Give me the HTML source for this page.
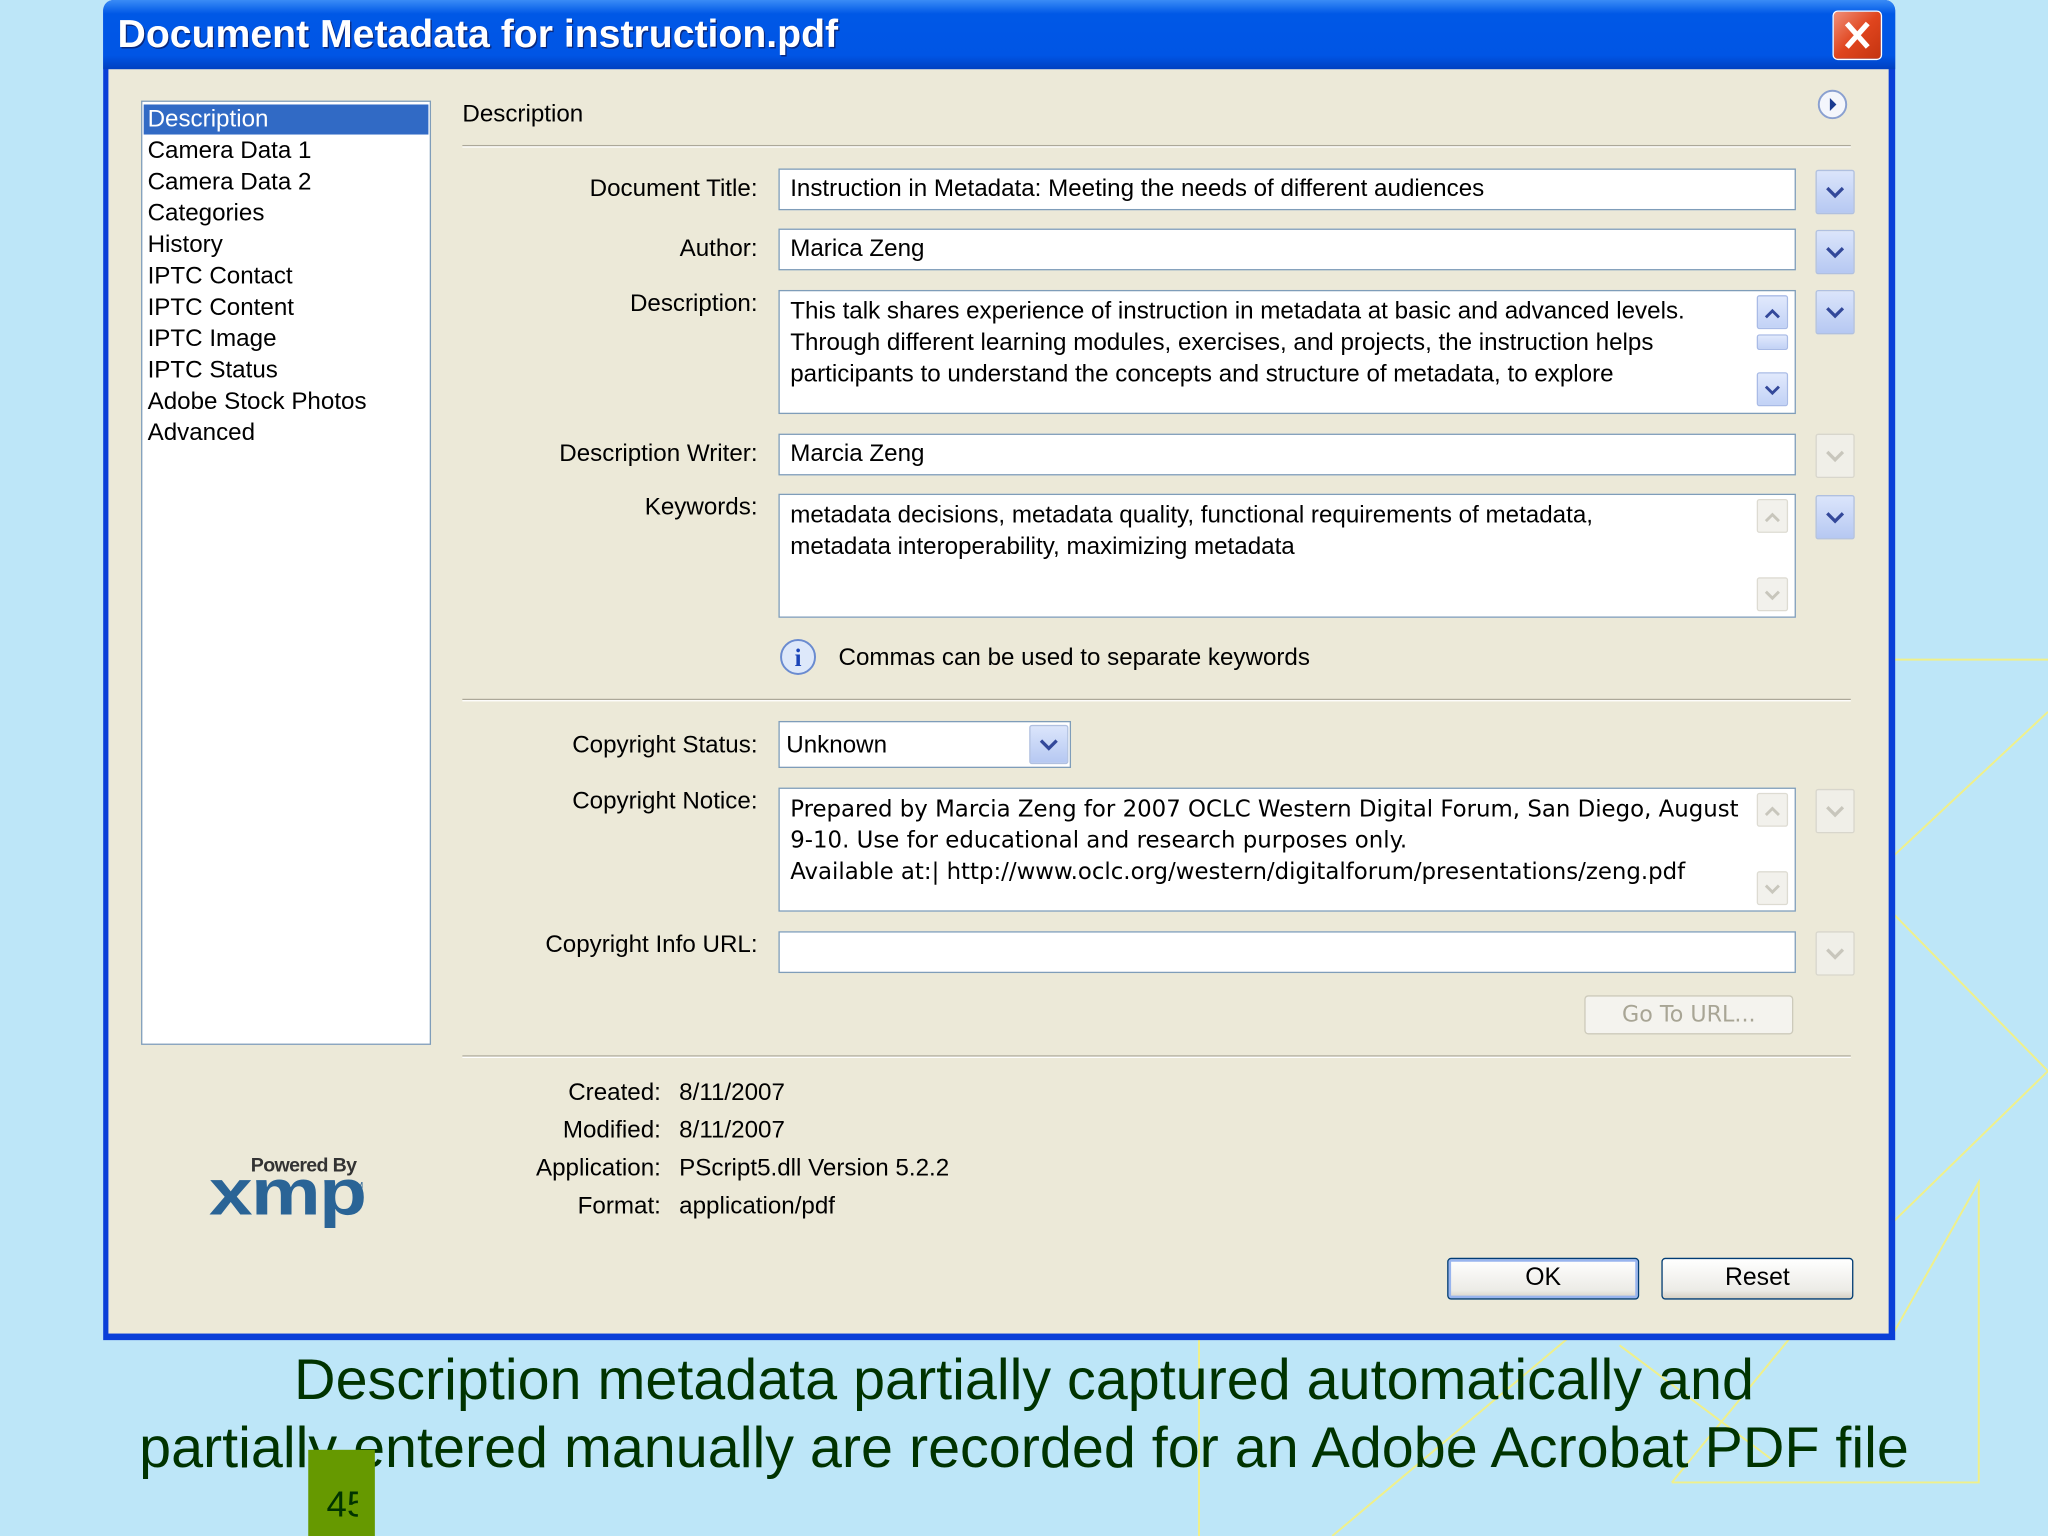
<!DOCTYPE html>
<html><head><meta charset="utf-8"><style>
*{margin:0;padding:0;box-sizing:border-box}
html,body{width:2048px;height:1536px;overflow:hidden;background:#bde6f8}
#s{position:absolute;left:0;top:0;width:1568px;height:1176px;transform:scale(1.30612);transform-origin:0 0;font-family:"Liberation Sans",sans-serif;}
.a{position:absolute}
.t{position:absolute;font-size:18.5px;color:#000;white-space:nowrap;line-height:24px}
.r{text-align:right;width:300px}
.f{position:absolute;background:#fff;border:1px solid #7f9db9}
.dd{position:absolute;width:30px;height:34px;background:linear-gradient(#dbe5fb,#b6c8f2);border:1px solid #b0c0e0;border-radius:2px}
.dd.dis{background:#f0efe8;border-color:#d8d6cc}
.sb{position:absolute;width:24px;height:26px;border:1px solid #a9bbe6;background:linear-gradient(#e1e9fc,#c2d2f6);border-radius:2px}
.sb.dis{background:#f2f1ec;border-color:#dddbd2}
.sep{position:absolute;left:354px;width:1063px;height:2px;border-top:1px solid #aca899;border-bottom:1px solid #fff}
.btn{position:absolute;height:32px;border:1px solid #003c74;border-radius:3px;background:linear-gradient(#fff,#ecebe6 80%,#d6d0c5);font-size:19px;text-align:center;line-height:30px}
</style></head><body><div id="s">
<svg class="a" style="left:0;top:0" width="1568" height="1176">
<g stroke="#f0f08a" stroke-width="1.5" fill="none">
<line x1="1450" y1="505" x2="1568" y2="505"/>
<line x1="1568" y1="545" x2="1450" y2="655"/>
<line x1="1450" y1="700" x2="1568" y2="820"/>
<line x1="1568" y1="820" x2="1450" y2="935"/>
<polyline points="1450,1020 1515,905 1515,1135 1280,1135"/>
<line x1="918" y1="1025" x2="918" y2="1176"/>
<line x1="1020" y1="1176" x2="1200" y2="1025"/>
<line x1="1280" y1="1135" x2="1370" y2="1025"/>
<line x1="1240" y1="1030" x2="1360" y2="1120"/>
</g></svg>
<div class="a" style="left:79px;top:0;width:1372px;height:1026px;background:#0a3fd8;border-radius:8px 8px 0 0"></div>
<div class="a" style="left:79px;top:0;width:1372px;height:53px;background:linear-gradient(#3a8cf6,#0058e6 20%,#0055e5 80%,#0040c0);border-radius:8px 8px 0 0"></div>
<div class="a" style="left:90px;top:10px;font-size:30px;font-weight:bold;color:#fff;text-shadow:1px 1px #0a2a80;white-space:nowrap">Document Metadata for instruction.pdf</div>
<div class="a" style="left:1403px;top:8px;width:38px;height:38px;background:linear-gradient(135deg,#f0907a,#e0451e 50%,#c43410);border:1.5px solid #fff;border-radius:4px"></div>
<svg class="a" style="left:1403px;top:8px" width="38" height="38"><path d="M11 10 L27 28 M27 10 L11 28" stroke="#fff" stroke-width="4"/></svg>
<div class="a" style="left:83px;top:53px;width:1363px;height:968px;background:#ece9d8"></div>
<div class="a" style="left:108px;top:77px;width:222px;height:723px;background:#fff;border:1px solid #7f9db9"></div>
<div class="a" style="left:110px;top:80px;width:218px;height:23px;background:#316ac5"></div>
<div class="t" style="left:113px;top:79px;color:#fff">Description</div>
<div class="t" style="left:113px;top:103px">Camera Data 1</div>
<div class="t" style="left:113px;top:127px">Camera Data 2</div>
<div class="t" style="left:113px;top:151px">Categories</div>
<div class="t" style="left:113px;top:175px">History</div>
<div class="t" style="left:113px;top:199px">IPTC Contact</div>
<div class="t" style="left:113px;top:223px">IPTC Content</div>
<div class="t" style="left:113px;top:247px">IPTC Image</div>
<div class="t" style="left:113px;top:271px">IPTC Status</div>
<div class="t" style="left:113px;top:295px">Adobe Stock Photos</div>
<div class="t" style="left:113px;top:319px">Advanced</div>
<div class="t" style="left:354px;top:75px">Description</div>
<svg class="a" style="left:1391px;top:68px" width="24" height="24"><circle cx="12" cy="12" r="10.5" fill="#f4f6fc" stroke="#8aa0d0" stroke-width="1.5"/><path d="M10 7 L15 12 L10 17Z" fill="#1a3a90"/></svg>
<div class="sep" style="top:111px"></div>
<div class="t r" style="left:280px;top:132px">Document Title:</div>
<div class="t r" style="left:280px;top:178px">Author:</div>
<div class="t r" style="left:280px;top:220px">Description:</div>
<div class="t r" style="left:280px;top:335px">Description Writer:</div>
<div class="t r" style="left:280px;top:376px">Keywords:</div>
<div class="t r" style="left:280px;top:558px">Copyright Status:</div>
<div class="t r" style="left:280px;top:601px">Copyright Notice:</div>
<div class="t r" style="left:280px;top:711px">Copyright Info URL:</div>
<div class="f" style="left:596px;top:129px;width:779px;height:32px"></div>
<div class="t" style="left:605px;top:132px">Instruction in Metadata: Meeting the needs of different audiences</div>
<div class="f" style="left:596px;top:175px;width:779px;height:32px"></div>
<div class="t" style="left:605px;top:178px">Marica Zeng</div>
<div class="f" style="left:596px;top:222px;width:779px;height:95px"></div>
<div class="t" style="left:605px;top:226px">This talk shares experience of instruction in metadata at basic and advanced levels.</div>
<div class="t" style="left:605px;top:250px">Through different learning modules, exercises, and projects, the instruction helps</div>
<div class="t" style="left:605px;top:274px">participants to understand the concepts and structure of metadata, to explore</div>
<div class="sb" style="left:1345px;top:226px"></div>
<div class="sb" style="left:1345px;top:256px;height:12px"></div>
<div class="sb" style="left:1345px;top:285px"></div>
<div class="f" style="left:596px;top:332px;width:779px;height:32px"></div>
<div class="t" style="left:605px;top:335px">Marcia Zeng</div>
<div class="f" style="left:596px;top:378px;width:779px;height:95px"></div>
<div class="t" style="left:605px;top:382px">metadata decisions, metadata quality, functional requirements of metadata,</div>
<div class="t" style="left:605px;top:406px">metadata interoperability, maximizing metadata</div>
<div class="sb dis" style="left:1345px;top:382px"></div>
<div class="sb dis" style="left:1345px;top:442px"></div>
<div class="f" style="left:596px;top:603px;width:779px;height:95px"></div>
<div class="t" style="left:605px;top:608px;font-family:'DejaVu Sans',sans-serif;font-size:17.5px">Prepared by Marcia Zeng for 2007 OCLC Western Digital Forum, San Diego, August</div>
<div class="t" style="left:605px;top:632px;font-family:'DejaVu Sans',sans-serif;font-size:17.5px">9-10. Use for educational and research purposes only.</div>
<div class="t" style="left:605px;top:656px;font-family:'DejaVu Sans',sans-serif;font-size:17.5px">Available at:| http://www.oclc.org/western/digitalforum/presentations/zeng.pdf</div>
<div class="sb dis" style="left:1345px;top:607px"></div>
<div class="sb dis" style="left:1345px;top:667px"></div>
<svg class="a" style="left:1345px;top:0" width="24" height="700"><g fill="none" stroke-width="2.2"><g stroke="#33489a"><path d="M7 243 L12 238 L17 243"/><path d="M7 296 L12 301 L17 296"/></g><g stroke="#c8c6bc"><path d="M7 399 L12 394 L17 399"/><path d="M7 453 L12 458 L17 453"/><path d="M7 624 L12 619 L17 624"/><path d="M7 678 L12 683 L17 678"/></g></g></svg>
<div class="dd" style="left:1390px;top:130px"></div>
<div class="dd" style="left:1390px;top:176px"></div>
<div class="dd" style="left:1390px;top:222px"></div>
<div class="dd dis" style="left:1390px;top:332px"></div>
<div class="dd" style="left:1390px;top:379px"></div>
<div class="dd dis" style="left:1390px;top:604px"></div>
<div class="dd dis" style="left:1390px;top:713px"></div>
<svg class="a" style="left:1390px;top:0" width="30" height="760"><g fill="none" stroke-width="2.5"><g stroke="#33489a"><path d="M9 144 L15 150 L21 144"/><path d="M9 190 L15 196 L21 190"/><path d="M9 236 L15 242 L21 236"/><path d="M9 393 L15 399 L21 393"/></g><g stroke="#c8c6bc"><path d="M9 346 L15 352 L21 346"/><path d="M9 618 L15 624 L21 618"/><path d="M9 727 L15 733 L21 727"/></g></g></svg>
<svg class="a" style="left:595px;top:487px" width="34" height="34"><circle cx="16" cy="16" r="13" fill="#dde8fa" stroke="#6a8bd0" stroke-width="1.5"/><text x="16" y="23" font-size="19" font-weight="bold" fill="#1a44b8" text-anchor="middle" font-family="Liberation Serif">i</text></svg>
<div class="t" style="left:642px;top:491px">Commas can be used to separate keywords</div>
<div class="sep" style="top:535px"></div>
<div class="f" style="left:596px;top:552px;width:224px;height:36px"></div>
<div class="t" style="left:602px;top:558px">Unknown</div>
<div class="dd" style="left:788px;top:555px;width:30px;height:30px"></div>
<svg class="a" style="left:788px;top:555px" width="30" height="30"><path d="M9 12 L15 18 L21 12" fill="none" stroke="#33489a" stroke-width="2.5"/></svg>
<div class="f" style="left:596px;top:713px;width:779px;height:32px"></div>
<div class="a" style="left:1213px;top:762px;width:160px;height:30px;border:1px solid #cdcabb;border-radius:3px;background:#f4f3ee;color:#a8a595;font-family:'DejaVu Sans',sans-serif;font-size:17px;text-align:center;line-height:28px">Go To URL...</div>
<div class="sep" style="top:808px"></div>
<div class="t r" style="left:206px;top:824px">Created:</div><div class="t" style="left:520px;top:824px">8/11/2007</div>
<div class="t r" style="left:206px;top:853px">Modified:</div><div class="t" style="left:520px;top:853px">8/11/2007</div>
<div class="t r" style="left:206px;top:882px">Application:</div><div class="t" style="left:520px;top:882px">PScript5.dll Version 5.2.2</div>
<div class="t r" style="left:206px;top:911px">Format:</div><div class="t" style="left:520px;top:911px">application/pdf</div>
<div class="a" style="left:192px;top:884px;font-size:15px;font-weight:bold;color:#333;letter-spacing:-0.5px">Powered By</div>
<div class="a" style="left:160px;top:884px;font-size:50px;font-weight:bold;color:#2a6496;transform:scaleX(1.2);transform-origin:0 0;letter-spacing:-1px">xmp</div>
<div class="a" style="left:268px;top:905px;font-size:7px;color:#2a6496">TM</div>
<div class="btn" style="left:1108px;top:963px;width:147px;box-shadow:inset 0 0 0 2px #98b4ee">OK</div>
<div class="btn" style="left:1272px;top:963px;width:147px">Reset</div>
<div class="a" style="left:0;top:1031px;width:1568px;text-align:center;font-size:44px;color:#003300;line-height:52px">Description metadata partially captured automatically and<br>partially entered manually are recorded for an Adobe Acrobat PDF file</div>
<div class="a" style="left:236px;top:1110px;width:51px;height:66px;background:#669900"></div>
<div class="a" style="left:250px;top:1136px;font-size:28px;color:#003300;width:24px;overflow:hidden;white-space:nowrap">45</div>
</div></body></html>
